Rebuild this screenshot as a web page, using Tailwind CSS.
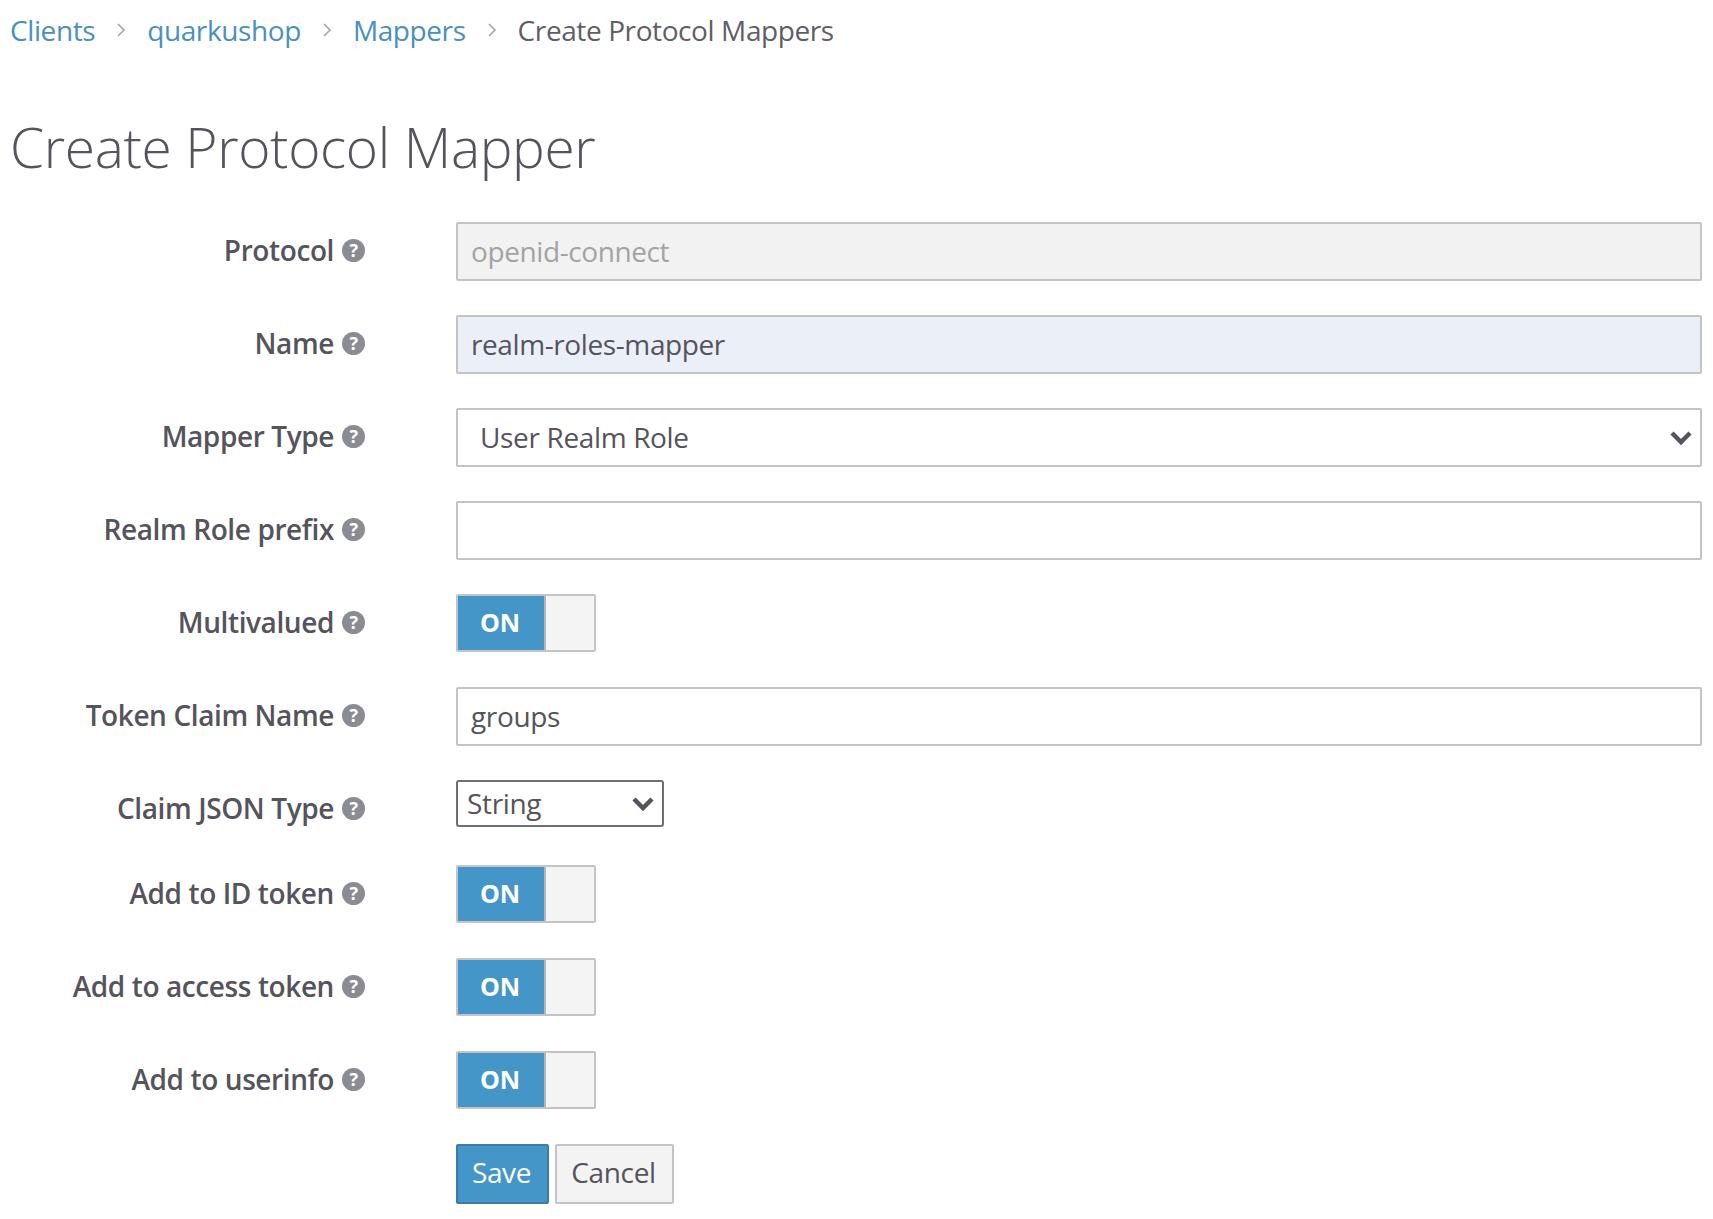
<!DOCTYPE html>
<html lang="en">
<head>
    <meta charset="UTF-8">
    <meta name="viewport" content="width=device-width, initial-scale=1.0">
    <title>Create Protocol Mapper</title>
    <script src="https://cdn.jsdelivr.net/npm/@tailwindcss/browser@4"></script>
</head>
<body class="bg-white font-['Open_Sans',sans-serif] text-[#55535c]">
    <div class="pl-[10px] pr-[11px] pt-[10px]">
        <!-- breadcrumb -->
        <nav class="flex items-center gap-[21px] h-[40px] text-[28px] tracking-[-0.4px] text-[#4a90bd]">
            <a href="#">Clients</a>
            <svg class="w-[10px] h-[16px]" viewBox="0 0 10 16" fill="none" stroke="#a5a5a8" stroke-width="1.6"><path d="M2 2l6 6-6 6"/></svg>
            <a href="#">quarkushop</a>
            <svg class="w-[10px] h-[16px]" viewBox="0 0 10 16" fill="none" stroke="#a5a5a8" stroke-width="1.6"><path d="M2 2l6 6-6 6"/></svg>
            <a href="#">Mappers</a>
            <svg class="w-[10px] h-[16px]" viewBox="0 0 10 16" fill="none" stroke="#a5a5a8" stroke-width="1.6"><path d="M2 2l6 6-6 6"/></svg>
            <span class="text-[#5f5e66]">Create Protocol Mappers</span>
        </nav>

        <h1 class="mt-[58px] h-[78px] flex items-center text-[55px] font-light text-[#55535c] tracking-[-0.35px]">Create Protocol Mapper</h1>

        <form class="mt-[36px] flex flex-col gap-[34px]">
            <!-- Protocol -->
            <div class="flex">
                <label class="w-[355px] h-[56px] flex items-center justify-end gap-[8px] text-[28px] font-semibold tracking-[-0.4px]">Protocol <span class="w-[23px] h-[23px] rounded-full bg-[#8b8c93] text-white text-[18px] font-bold flex items-center justify-center">?</span></label>
                <input type="text" disabled value="openid-connect" class="ml-[91px] flex-1 h-[59px] px-[13px] pb-[1px] border-2 border-[#c4c4c6] rounded-[2px] bg-[#f2f2f2] text-[28px] text-[#a3a3a6] tracking-[-0.4px]">
            </div>
            <!-- Name -->
            <div class="flex">
                <label class="w-[355px] h-[56px] flex items-center justify-end gap-[8px] text-[28px] font-semibold tracking-[-0.4px]">Name <span class="w-[23px] h-[23px] rounded-full bg-[#8b8c93] text-white text-[18px] font-bold flex items-center justify-center">?</span></label>
                <input type="text" value="realm-roles-mapper" class="ml-[91px] flex-1 h-[59px] px-[13px] pb-[1px] border-2 border-[#c4c4c6] rounded-[2px] bg-[#ebf0f8] text-[28px] text-[#55535c] tracking-[-0.4px]">
            </div>
            <!-- Mapper Type -->
            <div class="flex">
                <label class="w-[355px] h-[56px] flex items-center justify-end gap-[8px] text-[28px] font-semibold tracking-[-0.4px]">Mapper Type <span class="w-[23px] h-[23px] rounded-full bg-[#8b8c93] text-white text-[18px] font-bold flex items-center justify-center">?</span></label>
                <div class="relative ml-[91px] flex-1 h-[59px]">
                    <select class="appearance-none w-full h-full pl-[22px] pb-[1px] border-2 border-[#c4c4c6] rounded-[2px] bg-white text-[28px] text-[#55535c] tracking-[-0.35px]">
                        <option>User Realm Role</option>
                    </select>
                    <svg class="absolute right-[9px] top-[22px] w-[24px] h-[16px] pointer-events-none" viewBox="0 0 24 16" fill="none" stroke="#55535c" stroke-width="4.5"><path d="M3 3l9 9 9-9"/></svg>
                </div>
            </div>
            <!-- Realm Role prefix -->
            <div class="flex">
                <label class="w-[355px] h-[56px] flex items-center justify-end gap-[8px] text-[28px] font-semibold tracking-[-0.4px]">Realm Role prefix <span class="w-[23px] h-[23px] rounded-full bg-[#8b8c93] text-white text-[18px] font-bold flex items-center justify-center">?</span></label>
                <input type="text" class="ml-[91px] flex-1 h-[59px] px-[13px] border-2 border-[#c4c4c6] rounded-[2px] bg-white text-[28px]">
            </div>
            <!-- Multivalued -->
            <div class="flex h-[59px]">
                <label class="w-[355px] h-[56px] flex items-center justify-end gap-[8px] text-[28px] font-semibold tracking-[-0.4px]">Multivalued <span class="w-[23px] h-[23px] rounded-full bg-[#8b8c93] text-white text-[18px] font-bold flex items-center justify-center">?</span></label>
                <div class="ml-[91px] w-[140px] h-[58px] flex rounded-[2px] border-2 border-[#c4c4c6] overflow-hidden">
                    <div class="w-[88px] -ml-[2px] -my-[2px] pb-[1px] bg-[#4596c8] text-white text-[25px] font-bold flex items-center justify-center">ON</div>
                    <div class="flex-1 bg-[#f4f4f4] border-l-2 border-[#b5b5b8] -my-[2px]"></div>
                </div>
            </div>
            <!-- Token Claim Name -->
            <div class="flex">
                <label class="w-[355px] h-[56px] flex items-center justify-end gap-[8px] text-[28px] font-semibold tracking-[-0.4px]">Token Claim Name <span class="w-[23px] h-[23px] rounded-full bg-[#8b8c93] text-white text-[18px] font-bold flex items-center justify-center">?</span></label>
                <input type="text" value="groups" class="ml-[91px] flex-1 h-[59px] px-[13px] pb-[1px] border-2 border-[#c4c4c6] rounded-[2px] bg-white text-[28px] text-[#55535c] tracking-[-0.35px]">
            </div>
            <!-- Claim JSON Type -->
            <div class="flex -mb-[5px]">
                <label class="w-[355px] h-[56px] flex items-center justify-end gap-[8px] text-[28px] font-semibold tracking-[-0.4px]">Claim JSON Type <span class="w-[23px] h-[23px] rounded-full bg-[#8b8c93] text-white text-[18px] font-bold flex items-center justify-center">?</span></label>
                <div class="relative ml-[91px] w-[208px] h-[47px]">
                    <select class="appearance-none w-full h-full pl-[9px] pb-[3px] border-2 border-[#6f6e75] rounded-[3px] bg-white text-[28px] text-[#55535c] tracking-[-0.35px]">
                        <option>String</option>
                    </select>
                    <svg class="absolute right-[9px] top-[16px] w-[24px] h-[16px] pointer-events-none" viewBox="0 0 24 16" fill="none" stroke="#55535c" stroke-width="4.5"><path d="M3 3l9 9 9-9"/></svg>
                </div>
            </div>
            <!-- Add to ID token -->
            <div class="flex h-[59px]">
                <label class="w-[355px] h-[56px] flex items-center justify-end gap-[8px] text-[28px] font-semibold tracking-[-0.4px]">Add to ID token <span class="w-[23px] h-[23px] rounded-full bg-[#8b8c93] text-white text-[18px] font-bold flex items-center justify-center">?</span></label>
                <div class="ml-[91px] w-[140px] h-[58px] flex rounded-[2px] border-2 border-[#c4c4c6] overflow-hidden">
                    <div class="w-[88px] -ml-[2px] -my-[2px] pb-[1px] bg-[#4596c8] text-white text-[25px] font-bold flex items-center justify-center">ON</div>
                    <div class="flex-1 bg-[#f4f4f4] border-l-2 border-[#b5b5b8] -my-[2px]"></div>
                </div>
            </div>
            <!-- Add to access token -->
            <div class="flex h-[59px]">
                <label class="w-[355px] h-[56px] flex items-center justify-end gap-[8px] text-[28px] font-semibold tracking-[-0.4px]">Add to access token <span class="w-[23px] h-[23px] rounded-full bg-[#8b8c93] text-white text-[18px] font-bold flex items-center justify-center">?</span></label>
                <div class="ml-[91px] w-[140px] h-[58px] flex rounded-[2px] border-2 border-[#c4c4c6] overflow-hidden">
                    <div class="w-[88px] -ml-[2px] -my-[2px] pb-[1px] bg-[#4596c8] text-white text-[25px] font-bold flex items-center justify-center">ON</div>
                    <div class="flex-1 bg-[#f4f4f4] border-l-2 border-[#b5b5b8] -my-[2px]"></div>
                </div>
            </div>
            <!-- Add to userinfo -->
            <div class="flex h-[59px]">
                <label class="w-[355px] h-[56px] flex items-center justify-end gap-[8px] text-[28px] font-semibold tracking-[-0.4px]">Add to userinfo <span class="w-[23px] h-[23px] rounded-full bg-[#8b8c93] text-white text-[18px] font-bold flex items-center justify-center">?</span></label>
                <div class="ml-[91px] w-[140px] h-[58px] flex rounded-[2px] border-2 border-[#c4c4c6] overflow-hidden">
                    <div class="w-[88px] -ml-[2px] -my-[2px] pb-[1px] bg-[#4596c8] text-white text-[25px] font-bold flex items-center justify-center">ON</div>
                    <div class="flex-1 bg-[#f4f4f4] border-l-2 border-[#b5b5b8] -my-[2px]"></div>
                </div>
            </div>
            <!-- buttons -->
            <div class="flex gap-[6px] pl-[446px]">
                <button type="button" class="w-[93px] h-[60px] pb-[4px] pr-[2px] bg-[#4596c8] border-2 border-[#3c7ba6] rounded-[2px] text-white text-[28px] tracking-[-0.35px]">Save</button>
                <button type="button" class="w-[119px] h-[60px] pb-[4px] pr-[2px] bg-[#f3f3f3] border-2 border-[#c4c4c6] rounded-[2px] text-[#55535c] text-[28px] tracking-[-0.35px]">Cancel</button>
            </div>
        </form>
    </div>
</body>
</html>
